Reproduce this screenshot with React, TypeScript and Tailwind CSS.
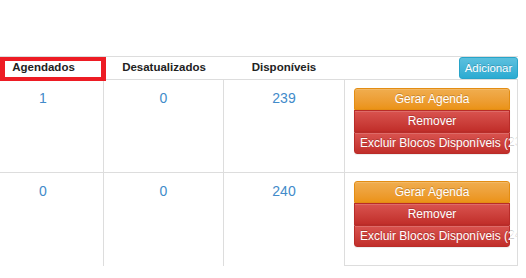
import React from "react";

type Row = { agendados: number; desatualizados: number; disponiveis: number };

const rows: Row[] = [
  { agendados: 1, desatualizados: 0, disponiveis: 239 },
  { agendados: 0, desatualizados: 0, disponiveis: 240 },
];

const btn =
  "h-[22px] border px-[5px] text-[12px] leading-[20px] text-white text-center whitespace-nowrap [text-shadow:0_-1px_0_rgba(0,0,0,0.2)] shadow-[inset_0_1px_0_rgba(255,255,255,0.15),0_1px_1px_rgba(0,0,0,0.075)]";
const danger = "bg-linear-to-b from-[#d9534f] to-[#c12e2a] border-[#b92c28]";

function Actions({ total, last }: { total: number; last: boolean }) {
  return (
    <div
      className={`w-[174px] shrink-0 overflow-hidden border-x border-[#ddd] px-[9px] pt-2 ${
        last ? "border-b" : ""
      }`}
    >
      <div className="flex w-[156px] flex-col">
        <div className={`${btn} rounded-t-[3px] bg-linear-to-b from-[#f0ad4e] to-[#eb9316] border-[#e38d13]`}>
          Gerar Agenda
        </div>
        <div className={`${btn} ${danger}`}>Remover</div>
        <div className={`${btn} ${danger} rounded-b-[3px]`}>
          Excluir Blocos Disponíveis ({total})
        </div>
      </div>
    </div>
  );
}

export default function App() {
  return (
    <div className="relative h-[278px] w-[526px] overflow-hidden bg-white font-['Liberation_Sans',Arial,sans-serif] text-[#333]">
      {/* highlight box */}
      <div className="absolute left-0 top-[57px] z-10 h-[24px] w-[106px] border-x-[5px] border-y-4 border-[#ed1c24]" />

      <div className="ml-[-17px] mt-[56px] w-[535px]">
        {/* header */}
        <div className="flex h-[24px] items-center border-y border-[#ddd] text-[11.5px] font-bold text-[#222]">
          <div className="w-[121px] text-center">Agendados</div>
          <div className="w-[120px] text-center">Desatualizados</div>
          <div className="w-[120px] text-center">Disponíveis</div>
          <div className="flex w-[174px] justify-end">
            <div className="h-[22px] w-[59px] rounded-[3px] border border-[#28a4c9] bg-linear-to-b from-[#5bc0de] to-[#2aabd2] text-center text-[11.4px] font-normal leading-[20px] text-white [text-shadow:0_-1px_0_rgba(0,0,0,0.2)]">
              Adicionar
            </div>
          </div>
        </div>

        {rows.map((r, i) => {
          const last = i === rows.length - 1;
          return (
            <div
              key={i}
              className={`flex h-[93px] text-[14px] leading-5 text-[#428bca] ${last ? "" : "border-b border-[#ddd]"}`}
            >
              <div className="w-[121px] border-r border-[#ddd] pt-2 text-center">{r.agendados}</div>
              <div className="w-[120px] border-r border-[#ddd] pt-2 text-center">{r.desatualizados}</div>
              <div className="w-[120px] pt-2 text-center">{r.disponiveis}</div>
              <Actions total={r.disponiveis} last={last} />
            </div>
          );
        })}
      </div>
    </div>
  );
}
